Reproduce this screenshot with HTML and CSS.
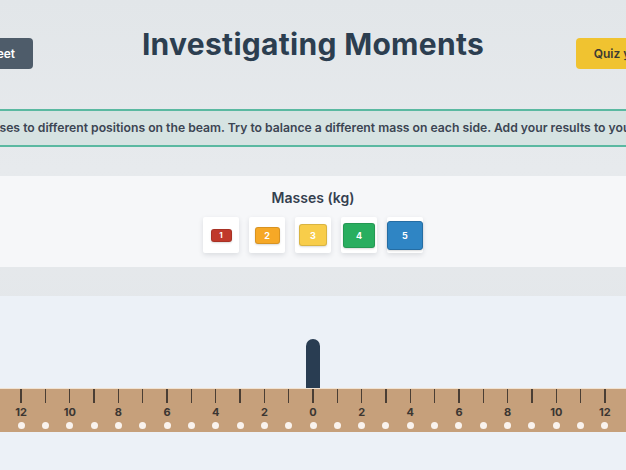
FILE: index.html
```html
<!DOCTYPE html>
<html>

<head>
  <meta charset="utf-8" />
  <title>Investigating Moments</title>
  <meta name="viewport" content="width=device-width, initial-scale=1">
  <link rel="stylesheet" href="styles.css">
</head>

<body>
  <header class="top">
    <button type="button" class="btn btn-sheet">Worksheet</button>
    <h1>Investigating Moments</h1>
    <button type="button" class="btn btn-quiz">Quiz yourself</button>
  </header>

  <p class="hint">Drag the masses to different positions on the beam. Try to balance a different mass on each side. Add your results to your worksheet.</p>

  <section class="masses">
    <h2>Masses (kg)</h2>
    <div class="tray">
      <div class="tile"><span class="mass m1">1</span></div>
      <div class="tile"><span class="mass m2">2</span></div>
      <div class="tile"><span class="mass m3">3</span></div>
      <div class="tile"><span class="mass m4">4</span></div>
      <div class="tile"><span class="mass m5">5</span></div>
    </div>
  </section>

  <div class="gap"></div>

  <section class="stage">
    <div class="pivot"></div>
    <div class="beam" id="beam"></div>
  </section>

  <script>
    (() => {
      // one slot per unit distance from the pivot
      const beam = document.querySelector('#beam');
      const frag = document.createDocumentFragment();
      for (let d = -16; d <= 16; d++) {
        const slot = document.createElement('div');
        slot.className = 'slot';
        const label = d % 2 === 0 ? Math.abs(d) : '';
        slot.innerHTML = `<i class="tick"></i><b class="num">${label}</b><i class="hole"></i>`;
        frag.appendChild(slot);
      }
      beam.appendChild(frag);
    })();
  </script>
</body>

</html>
```

FILE: styles.css
```css
* { box-sizing: border-box; margin: 0; padding: 0; }

html, body {
  width: 100%;
  overflow: hidden;
}

body {
  font-family: Inter, "Open Sans", sans-serif;
  color: #2d3e50;
  background: linear-gradient(to bottom, #e2e6e9, #e7eaed 170px, #e0e4e7);
  min-height: 100vh;
}

/* header: title in the middle, buttons on the outer edges */
.top {
  display: grid;
  grid-template-columns: 1fr auto 1fr;
  align-items: start;
  width: 758px;
  margin: 0 0 0 calc(50% - 379px);
  padding-top: 26px;
}

.top h1 {
  font-size: 30px;
  line-height: 36px;
  font-weight: 700;
  color: #2c3e50;
  letter-spacing: .3px;
}

.btn {
  margin-top: 12px;
  height: 31px;
  padding: 0 18px;
  border: none;
  border-radius: 4px;
  font: 600 12px/31px Inter, "Open Sans", sans-serif;
}

.btn-sheet {
  justify-self: start;
  background: #4e5c6a;
  color: #fff;
}

.btn-quiz {
  justify-self: end;
  padding-right: 21px;
  background: #f0c330;
  color: #3b3a33;
}

/* instructions strip */
.hint {
  margin-top: 40px;
  width: 1100px;
  margin-left: calc(50% - 550px);
  height: 38px;
  border-top: 2px solid #5ab9a1;
  border-bottom: 2px solid #5ab9a1;
  background: #d6e3e2;
  text-align: center;
  font-size: 12.2px;
  font-weight: 600;
  line-height: 34px;
  color: #3c4553;
  white-space: nowrap;
}

/* mass picker */
.masses {
  margin-top: 29px;
  background: #f6f7f9;
  padding: 13px 0 14px;
  text-align: center;
}

.masses h2 {
  font-size: 14px;
  line-height: 18px;
  font-weight: 600;
  color: #34404f;
}

.tray {
  display: flex;
  justify-content: center;
  gap: 10px;
  margin-top: 10px;
}

.tile {
  width: 36px;
  height: 36px;
  background: #fff;
  border-radius: 2px;
  box-shadow: 0 2px 5px rgba(40, 50, 60, .13);
  display: flex;
  align-items: center;
  justify-content: center;
}

.mass {
  display: flex;
  align-items: center;
  justify-content: center;
  border-radius: 3px;
  border: 1px solid rgba(0, 0, 0, .12);
  color: #fff;
  font-size: 9px;
  font-weight: 700;
  box-shadow: 0 1px 2px rgba(0, 0, 0, .15);
}

.m1 { width: 21px; height: 13px; background: #c0392b; font-size: 8px; }
.m2 { width: 25px; height: 17px; background: #f6a826; }
.m3 { width: 28px; height: 22px; background: #f8cd4a; }
.m4 { width: 32px; height: 25px; background: #29ae5f; }
.m5 { width: 36px; height: 29px; background: #2f85c4; border-color: #256da3; }

.gap { height: 29px; }

/* beam on its pivot */
.stage {
  background: #ecf1f7;
  padding-top: 43px;
  height: 174px;
}

.pivot {
  width: 14px;
  height: 49px;
  margin: 0 auto;
  background: #293d52;
  border-radius: 7px 7px 0 0;
}

.beam {
  display: flex;
  justify-content: center;
  height: 44px;
  background: #c6a07b;
  border-top: 1px solid #f1e3d2;
}

.slot {
  flex: none;
  width: 24.33px;
  display: flex;
  flex-direction: column;
  align-items: center;
}

.tick {
  display: block;
  width: 1.5px;
  height: 14px;
  background: #4a3e34;
}

.num {
  height: 14px;
  margin-top: 2px;
  font-size: 11px;
  line-height: 14px;
  font-weight: 700;
  color: #3b3632;
}

.hole {
  display: block;
  width: 7px;
  height: 7px;
  margin-top: 3px;
  border-radius: 50%;
  background: #faf3ee;
}
```
